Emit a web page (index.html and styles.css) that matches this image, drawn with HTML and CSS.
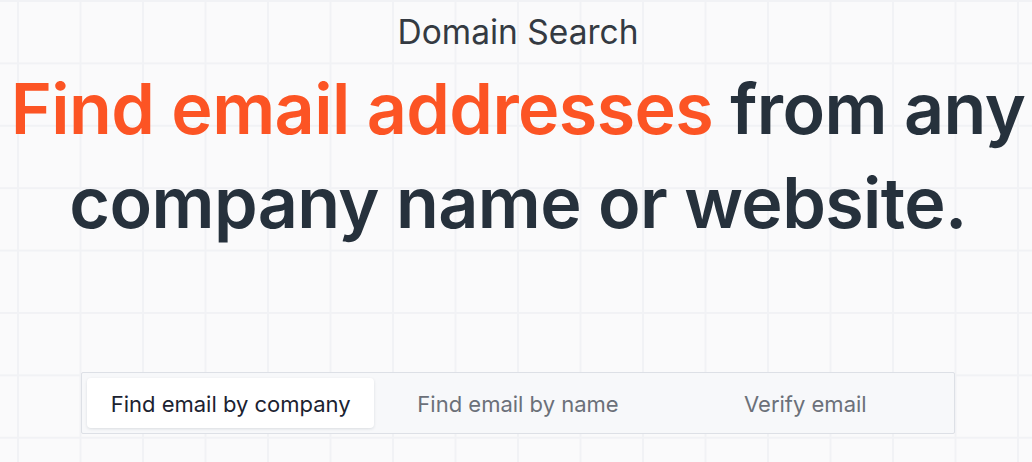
FILE: index.html
```html
<!DOCTYPE html>
<html lang="en">
<head>
    <meta charset="UTF-8">
    <meta name="viewport" content="width=device-width, initial-scale=1.0">
    <title>Domain Search</title>
    <link rel="stylesheet" href="styles.css">
</head>
<body>
    <section class="hero">
        <h2 class="kicker">Domain Search</h2>
        <h1 class="headline">
            <span class="accent">Find email addresses</span> from any<br>
            company name or website.
        </h1>

        <div class="tabs">
            <button class="tab active">Find email by company</button>
            <button class="tab">Find email by name</button>
            <button class="tab">Verify email</button>
        </div>
    </section>
</body>
</html>
```

FILE: styles.css
```css
body{
    margin: 0;
    background-color: #fafafb;
    background-image:
        linear-gradient(to right, #f1f2f5 2px, transparent 2px),
        linear-gradient(to bottom, #f1f2f5 2px, transparent 2px);
    background-size: 62.5px 62.4px;
    background-position: 17px 0px;
    font-family: Inter, "Noto Sans", sans-serif;
    height: 462px;
    overflow: hidden;
}
.hero{
    display: flex;
    flex-direction: column;
    align-items: center;
    padding-left: 4px;
}
.kicker{
    margin: 11px 0 0;
    font-size: 33.5px;
    font-weight: 400;
    line-height: 42px;
    color: #343a42;
}
.headline{
    margin: 9px -40px 0;
    font-size: 70px;
    font-weight: 600;
    line-height: 94px;
    letter-spacing: -0.6px;
    text-align: center;
    color: #26313c;
    white-space: nowrap;
}
.accent{
    color: #fc5424;
}
.tabs{
    margin-top: 122px;
    width: 862px;
    display: grid;
    grid-template-columns: repeat(3, 1fr);
    padding: 5px;
    background-color: #f7f8fa;
    border: 1px solid #dde0e6;
    border-radius: 2px;
}
.tab{
    height: 50px;
    padding: 2px 0 0;
    border: 0;
    background: transparent;
    font-family: Inter, "Noto Sans", sans-serif;
    font-size: 22px;
    color: #6b7079;
    cursor: pointer;
}
.tab.active{
    background-color: #ffffff;
    color: #1b2230;
    border-radius: 4px;
    box-shadow: 0 1px 3px rgba(20, 30, 50, 0.12);
}
```
